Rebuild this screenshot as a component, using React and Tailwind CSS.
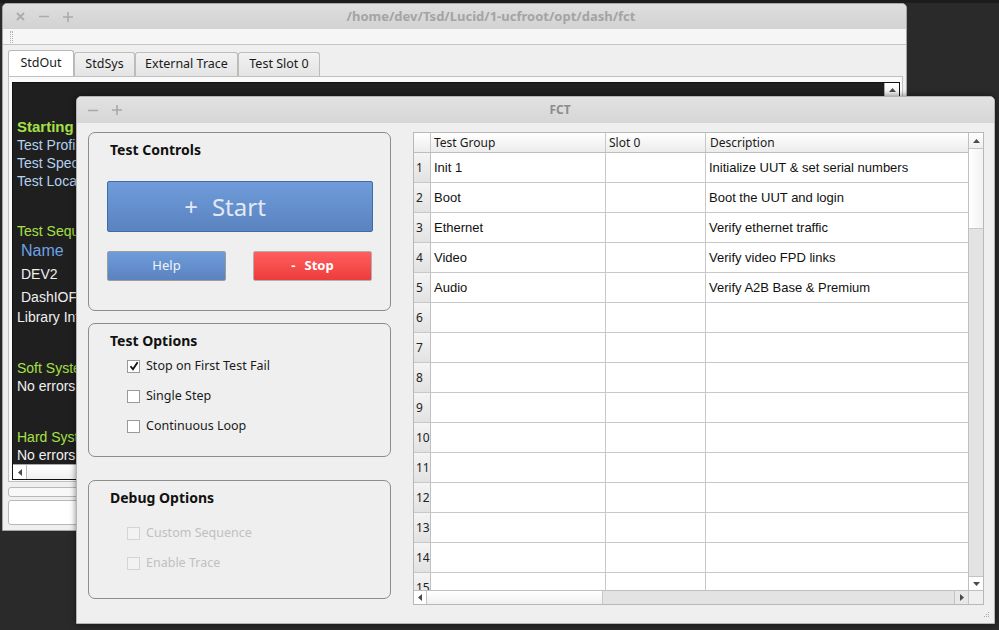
import React from 'react';

const rows = [
    ['Init 1', 'Initialize UUT & set serial numbers'],
    ['Boot', 'Boot the UUT and login'],
    ['Ethernet', 'Verify ethernet traffic'],
    ['Video', 'Verify video FPD links'],
    ['Audio', 'Verify A2B Base & Premium'],
    ['', ''], ['', ''], ['', ''], ['', ''], ['', ''],
    ['', ''], ['', ''], ['', ''], ['', ''], ['', ''],
];

function Arrow({ dir }) {
    const pts = {
        up: '0,4 3.5,0 7,4',
        down: '0,0 3.5,4 7,0',
        left: '4,0 0,3.5 4,7',
        right: '0,0 4,3.5 0,7',
    }[dir];
    const horiz = dir === 'left' || dir === 'right';
    return (
        <svg width={horiz ? 4 : 7} height={horiz ? 7 : 4} viewBox={horiz ? '0 0 4 7' : '0 0 7 4'}>
            <polygon points={pts} fill="#4a4a4a" />
        </svg>
    );
}

function Check({ checked, disabled }) {
    return (
        <span className={`w-[13px] h-[13px] shrink-0 flex items-center justify-center border ${disabled ? 'border-[#d4d4d4] bg-[#f2f2f2]' : 'border-[#9a9a9a] bg-white'}`}>
            {checked && (
                <svg width="10" height="10" viewBox="0 0 10 10">
                    <path d="M1.5 5.2 L4 8.3 L8.6 1.2" stroke="#111" strokeWidth="1.8" fill="none" />
                </svg>
            )}
        </span>
    );
}

function Option({ label, checked, disabled }) {
    return (
        <div className="h-[30px] flex items-center pl-[38px] gap-[6px]">
            <Check checked={checked} disabled={disabled} />
            <span className={`text-[12.5px] ${disabled ? 'text-[#c0c0c0]' : 'text-[#1a1a1a]'}`}>{label}</span>
        </div>
    );
}

function GroupBox({ title, className, children }) {
    return (
        <div className={`rounded-[7px] border border-[#8c8c8c] pt-[8px] ${className}`}>
            <div className="pl-[21px] h-[18px] leading-[18px] text-[14px] font-bold text-[#111]">{title}</div>
            {children}
        </div>
    );
}

export default function App() {
    return (
        <div className="relative w-[999px] h-[630px] overflow-hidden bg-[#2a2a2a] [font-family:'Noto_Sans','Open_Sans',sans-serif]">
            <div className="h-[3px] bg-[#1b1b1b]" />

            {/* Back window: dash */}
            <div className="absolute left-[2px] top-[3px] w-[905px] h-[528px] flex flex-col bg-[#efefef] border border-[#a6a6a6] rounded-t-[5px] overflow-hidden">
                <div className="h-[25px] shrink-0 flex items-center bg-gradient-to-b from-[#dedede] to-[#d2d2d2]">
                    <div className="w-[77px] pl-[5px] flex items-center">
                        <span className="w-[24px] flex justify-center">
                            <svg width="9" height="9" viewBox="0 0 9 9"><path d="M1 1 L8 8 M8 1 L1 8" stroke="#ababab" strokeWidth="1.8" /></svg>
                        </span>
                        <span className="w-[24px] flex justify-center">
                            <svg width="10" height="9" viewBox="0 0 10 9"><path d="M0 4.5 H10" stroke="#ababab" strokeWidth="1.6" /></svg>
                        </span>
                        <span className="w-[24px] flex justify-center">
                            <svg width="10" height="10" viewBox="0 0 10 10"><path d="M0 5 H10 M5 0 V10" stroke="#ababab" strokeWidth="1.6" /></svg>
                        </span>
                    </div>
                    <div className="flex-1 text-center text-[13px] font-bold text-[#a4a4a4] pr-[4px]">/home/dev/Tsd/Lucid/1-ucfroot/opt/dash/fct</div>
                </div>
                <div className="h-[16px] shrink-0 bg-[#f6f6f6] border-b border-[#c4c4c4] flex items-center pl-[7px]">
                    <div className="w-[3px] h-[12px] border-l border-r border-dotted border-[#b0b0b0]" />
                </div>

                <div className="flex-1 flex flex-col pl-[5px] pr-[3px] pt-[5px]">
                    {/* tabs */}
                    <div className="h-[26px] flex items-end text-[12.5px] text-[#1a1a1a]">
                        <div className="w-[66px] h-[26px] bg-white border border-b-0 border-[#b8b8b8] rounded-t-[3px] flex items-center justify-center">StdOut</div>
                        <div className="w-[61px] h-[24px] bg-gradient-to-b from-[#f2f2f2] to-[#e4e4e4] border border-b-0 border-[#bcbcbc] rounded-t-[3px] flex items-center justify-center">StdSys</div>
                        <div className="w-[103px] h-[24px] bg-gradient-to-b from-[#f2f2f2] to-[#e4e4e4] border border-b-0 border-[#bcbcbc] rounded-t-[3px] flex items-center justify-center">External Trace</div>
                        <div className="w-[82px] h-[24px] bg-gradient-to-b from-[#f2f2f2] to-[#e4e4e4] border border-b-0 border-[#bcbcbc] rounded-t-[3px] flex items-center justify-center">Test Slot 0</div>
                    </div>

                    {/* panel */}
                    <div className="h-[406px] border border-[#c0c0c0] bg-[#fafafa] pl-[3px] pr-[2px] pt-[5px] pb-[1px] flex">
                        <div className="flex-1 flex flex-col border border-[#111] bg-[#1f1f1f]">
                            <div className="flex-1 flex min-h-0">
                                <div className="flex-1 pl-[4px] pt-[35px] [font-family:'Liberation_Sans',Arial,sans-serif] overflow-hidden">
                                    <div className="text-[15px] leading-[18px] font-bold text-[#a6e046]">Starting test sequence</div>
                                    <div className="text-[14px] leading-[18px] text-[#b4d2ee]">Test Profile: default</div>
                                    <div className="text-[14px] leading-[18px] text-[#b4d2ee]">Test Spec: fct</div>
                                    <div className="text-[14px] leading-[18px] text-[#b4d2ee]">Test Location: lab</div>
                                    <div className="mt-[32px] text-[14px] leading-[18px] text-[#a6e046]">Test Sequence</div>
                                    <div className="mt-[1px] pl-[4px] text-[16px] leading-[20px] text-[#6ea2e4]">Name</div>
                                    <div className="mt-[3px] pl-[4px] text-[14px] leading-[20px] text-[#f0f0f0]">DEV2</div>
                                    <div className="mt-[3px] pl-[4px] text-[14px] leading-[20px] text-[#f0f0f0]">DashIOF</div>
                                    <div className="mt-[1px] text-[14px] leading-[18px] text-[#f0f0f0]">Library Info</div>
                                    <div className="mt-[33px] text-[14px] leading-[18px] text-[#a6e046]">Soft System Errors</div>
                                    <div className="text-[14px] leading-[18px] text-[#f0f0f0]">No errors</div>
                                    <div className="mt-[33px] text-[14px] leading-[18px] text-[#a6e046]">Hard System Errors</div>
                                    <div className="text-[14px] leading-[18px] text-[#f0f0f0]">No errors</div>
                                </div>
                                <div className="w-[15px] bg-[#e4e4e4] border-l border-[#aaa] flex flex-col">
                                    <div className="h-[15px] bg-gradient-to-b from-white to-[#ececec] border-b border-[#bbb] flex items-center justify-center"><Arrow dir="up" /></div>
                                </div>
                            </div>
                            <div className="h-[15px] flex border-t border-[#aaa] bg-[#e4e4e4]">
                                <div className="w-[14px] bg-white border-r border-[#bbb] flex items-center justify-center"><Arrow dir="left" /></div>
                                <div className="w-[300px] bg-gradient-to-b from-white to-[#f0f0f0]" />
                            </div>
                        </div>
                    </div>

                    <div className="mt-[5px] h-[10px] rounded-[3px] border border-[#b8b8b8] bg-[#f8f8f8]" />
                    <div className="mt-[3px] h-[25px] rounded-[3px] border border-[#b8b8b8] bg-white" />
                </div>
            </div>

            {/* Front window: FCT */}
            <div className="absolute left-[76px] top-[96px] w-[919px] h-[528px] flex flex-col bg-[#efefef] border border-[#b4b4b4] rounded-t-[5px] overflow-hidden shadow-[0_0_6px_rgba(0,0,0,0.5)]">
                <div className="h-[26px] shrink-0 flex items-center bg-gradient-to-b from-[#e2e2e2] to-[#d6d6d6]">
                    <div className="w-[53px] pl-[4px] flex items-center">
                        <span className="w-[24px] flex justify-center">
                            <svg width="10" height="9" viewBox="0 0 10 9"><path d="M0 4.5 H10" stroke="#a8a8a8" strokeWidth="1.6" /></svg>
                        </span>
                        <span className="w-[24px] flex justify-center">
                            <svg width="10" height="10" viewBox="0 0 10 10"><path d="M0 5 H10 M5 0 V10" stroke="#a8a8a8" strokeWidth="1.6" /></svg>
                        </span>
                    </div>
                    <div className="flex-1 text-center text-[12px] font-bold text-[#8c8c8c] pr-[4px]">FCT</div>
                </div>

                <div className="flex-1 flex pl-[11px] pt-[9px] relative">
                    {/* left column */}
                    <div className="w-[303px] flex flex-col">
                        <GroupBox title="Test Controls" className="h-[179px]">
                            <div className="pl-[18px] pt-[22px]">
                                <div className="w-[266px] h-[51px] rounded-[2px] border border-[#3d6ca8] bg-gradient-to-b from-[#709cdb] to-[#5a83bf] flex items-center justify-center gap-[14px] pr-[30px] text-[#e2e9f4] text-[24px]">
                                    <span>+</span><span>Start</span>
                                </div>
                                <div className="mt-[19px] flex gap-[27px]">
                                    <div className="w-[119px] h-[30px] rounded-[2px] border border-[#9c9c9c] bg-gradient-to-b from-[#709cdb] to-[#5a83bf] flex items-center justify-center text-[13px] text-[#f0f4fa]">Help</div>
                                    <div className="w-[119px] h-[30px] rounded-[2px] border border-[#b0b0b0] bg-gradient-to-b from-[#ff5d5d] to-[#ec3c3c] flex items-center justify-center gap-[9px] text-[13px] font-bold text-white">
                                        <span>-</span><span>Stop</span>
                                    </div>
                                </div>
                            </div>
                        </GroupBox>

                        <GroupBox title="Test Options" className="mt-[12px] h-[134px]">
                            <div className="mt-[1px]">
                                <Option label="Stop on First Test Fail" checked />
                                <Option label="Single Step" />
                                <Option label="Continuous Loop" />
                            </div>
                        </GroupBox>

                        <GroupBox title="Debug Options" className="mt-[23px] h-[119px]">
                            <div className="mt-[11px]">
                                <Option label="Custom Sequence" disabled />
                                <Option label="Enable Trace" disabled />
                            </div>
                        </GroupBox>
                    </div>

                    {/* table */}
                    <div className="ml-[22px] w-[571px] h-[473px] border border-[#b8b8b8] bg-white flex flex-col">
                        <div className="flex-1 flex min-h-0">
                            <div className="flex-1 overflow-hidden">
                                <div className="h-[20px] grid grid-cols-[17px_175px_100px_1fr] bg-gradient-to-b from-white to-[#ececec] border-b border-[#bdbdbd] text-[12px] text-[#1a1a1a]">
                                    <div className="border-r border-[#c8c8c8]" />
                                    <div className="border-r border-[#c8c8c8] pl-[3px] flex items-center">Test Group</div>
                                    <div className="border-r border-[#c8c8c8] pl-[3px] flex items-center">Slot 0</div>
                                    <div className="pl-[4px] flex items-center">Description</div>
                                </div>
                                {rows.map((r, i) => (
                                    <div key={i} className="h-[30px] grid grid-cols-[17px_175px_100px_1fr] border-b border-[#c8c8c8]">
                                        <div className="border-r border-[#c0c0c0] bg-gradient-to-b from-[#f4f4f4] to-[#e2e2e2] pl-[2px] flex items-center text-[12px] text-[#222]">{i + 1}</div>
                                        <div className="border-r border-[#c8c8c8] pl-[3px] flex items-center text-[13px] text-[#111] [font-family:'Liberation_Sans',Arial,sans-serif]">{r[0]}</div>
                                        <div className="border-r border-[#c8c8c8]" />
                                        <div className="pl-[3px] flex items-center text-[13px] text-[#111] [font-family:'Liberation_Sans',Arial,sans-serif]">{r[1]}</div>
                                    </div>
                                ))}
                            </div>
                            <div className="w-[15px] border-l border-[#c0c0c0] bg-[#e3e3e3] flex flex-col">
                                <div className="h-[16px] bg-gradient-to-b from-white to-[#efefef] border-b border-[#c4c4c4] flex items-center justify-center"><Arrow dir="up" /></div>
                                <div className="h-[80px] bg-gradient-to-r from-white to-[#f2f2f2] border-b border-[#c8c8c8]" />
                                <div className="flex-1" />
                                <div className="h-[14px] bg-white border-t border-[#c4c4c4] flex items-center justify-center"><Arrow dir="down" /></div>
                            </div>
                        </div>
                        <div className="h-[14px] flex border-t border-[#c0c0c0] bg-[#e3e3e3]">
                            <div className="w-[13px] bg-white border-r border-[#c4c4c4] flex items-center justify-center"><Arrow dir="left" /></div>
                            <div className="w-[176px] bg-gradient-to-b from-white to-[#f0f0f0] border-r border-[#c8c8c8]" />
                            <div className="flex-1" />
                            <div className="w-[14px] bg-[#e8e8e8] border-l border-[#c4c4c4] flex items-center justify-center"><Arrow dir="right" /></div>
                            <div className="w-[15px] bg-[#efefef] border-l border-[#c4c4c4]" />
                        </div>
                    </div>

                    <svg className="absolute right-[4px] bottom-[4px]" width="7" height="7" viewBox="0 0 7 7">
                        <rect x="5" y="0" width="1" height="1" fill="#aaa" />
                        <rect x="3" y="2" width="1" height="1" fill="#aaa" />
                        <rect x="5" y="2" width="1" height="1" fill="#aaa" />
                        <rect x="1" y="4" width="1" height="1" fill="#aaa" />
                        <rect x="3" y="4" width="1" height="1" fill="#aaa" />
                        <rect x="5" y="4" width="1" height="1" fill="#aaa" />
                    </svg>
                </div>
            </div>
        </div>
    );
}
